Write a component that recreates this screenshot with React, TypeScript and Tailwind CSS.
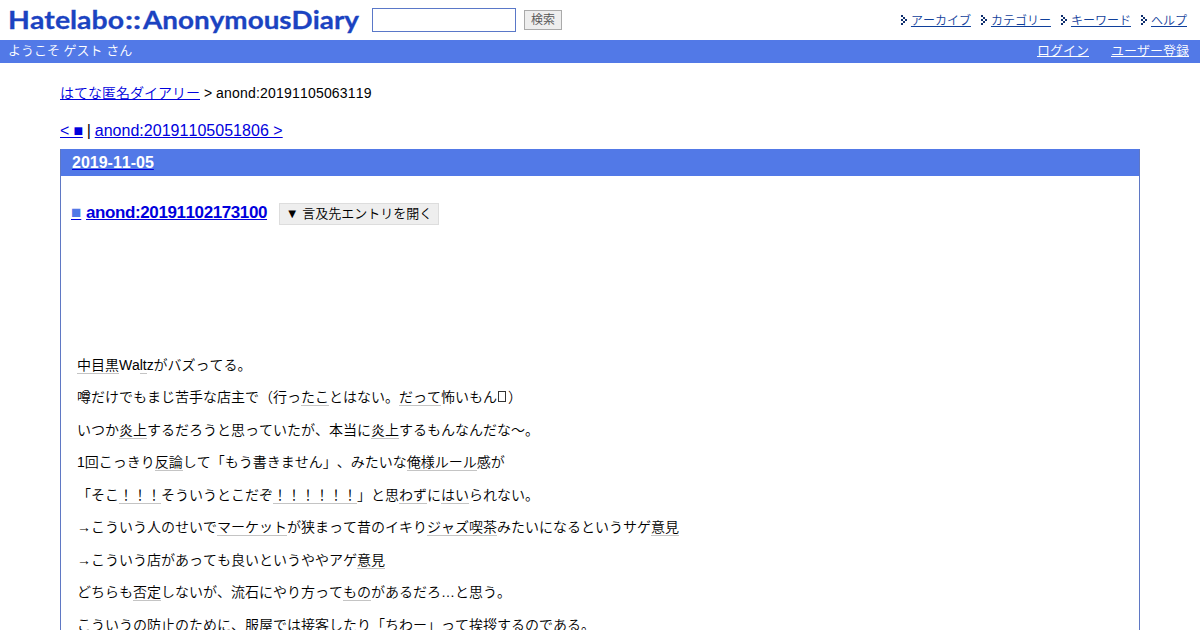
import type { ReactNode } from "react";

const menu = ["アーカイブ", "カテゴリー", "キーワード", "ヘルプ"];

const Keyword = ({ children }: { children: ReactNode }) => (
  <span className="border-b border-[#c4c4c4]">{children}</span>
);

const Arrow = () => (
  <svg width="6" height="10" viewBox="0 0 6 10" fill="#10306e" shapeRendering="crispEdges" className="mr-1">
    <path d="M0 0h2v2H0zM2 2h2v2H2zM4 4h2v2H4zM2 6h2v2H2zM0 8h2v2H0zM0 4h2v2H0z" />
  </svg>
);

const Logo = () => (
  <svg width="352" height="40" viewBox="0 0 352 40" fill="#1b43c1" stroke="#1b43c1" strokeWidth="0.3" className="font-['Lato'] font-bold">
    <text x="0" y="28.5" fontSize="25.5" textLength="116" lengthAdjust="spacingAndGlyphs">Hatelabo</text>
    <text x="117" y="28.5" fontSize="25.5" textLength="16" lengthAdjust="spacingAndGlyphs">::</text>
    <text x="135" y="28.5" fontSize="25.5" textLength="216" lengthAdjust="spacingAndGlyphs">AnonymousDiary</text>
  </svg>
);

const Header = () => (
  <header>
    <div className="flex h-10 items-center pl-2">
      <Logo />
      <input className="ml-3 h-6 w-36 border border-[#5a78c8] bg-white" />
      <button className="ml-2 h-5 w-[38px] border border-[#aaa] bg-[#eee] text-xs leading-[17px] text-[#555]">検索</button>
      <nav className="mr-[13px] ml-auto flex gap-2.5 text-xs">
        {menu.map((label) => (
          <div key={label} className="flex items-center">
            <Arrow />
            <a href="#" className="pt-px text-[#10409b] underline">{label}</a>
          </div>
        ))}
      </nav>
    </div>
    <div className="flex h-[23px] justify-between bg-[#5279e7] pr-[11px] pl-2 text-[13px] leading-[22px] text-white">
      <span>ようこそ ゲスト さん</span>
      <div className="flex gap-[22px]">
        <a href="#" className="underline">ログイン</a>
        <a href="#" className="underline">ユーザー登録</a>
      </div>
    </div>
  </header>
);

const Entry = () => (
  <div className="px-4 pt-[123.75px] text-sm leading-[32.5px]">
    <p><Keyword>中目黒</Keyword><span className="tracking-[-0.1px]">Wa<Keyword>lt</Keyword>z</span>がバズってる。</p>
    <p>
      噂だけでもまじ苦手な店主で（行っ<Keyword>たこ</Keyword>とはない。<Keyword>だって</Keyword>怖いもん
      <span className="mr-0.5 ml-px inline-block h-[11px] w-2 border border-[#333]" />）
    </p>
    <p>いつか<Keyword>炎上</Keyword>するだろうと思っていたが、本当に<Keyword>炎上</Keyword>するもんなんだな〜。</p>
    <p>1回こっきり<Keyword>反論</Keyword>して「もう書きません」、みたいな<Keyword>俺様ルール</Keyword>感が</p>
    <p>「そこ<Keyword>！！！</Keyword>そういうとこだぞ<Keyword>！！！！！！</Keyword>」と思<Keyword>わず</Keyword>に<Keyword>はい</Keyword>られない。</p>
    <p>→こういう人のせいで<Keyword>マーケット</Keyword>が狭まって昔のイキり<Keyword>ジャズ喫茶</Keyword>みたいになるというサゲ<Keyword>意見</Keyword></p>
    <p>→こういう店があっても良いというややアゲ<Keyword>意見</Keyword></p>
    <p>どちらも<Keyword>否定</Keyword>しないが、流石にやり方って<Keyword>もの</Keyword>があるだろ…と思う。</p>
    <p>こういうの防止のために、服屋では接客したり「ちわー」って挨拶するのである。</p>
  </div>
);

export default function App() {
  return (
    <div lang="ja" className="h-[630px] overflow-hidden bg-white font-['Liberation_Sans','Noto_Sans_CJK_JP',sans-serif] font-[350] text-black [font-kerning:none] [text-spacing-trim:space-all]">
      <Header />
      <main className="px-[60px]">
        <p className="pt-5 text-sm">
          <a href="#" className="text-[#0000dd] underline">はてな匿名ダイアリー</a> &gt;{" "}
          <span className="tracking-[0.2px]">anond:20191105063119</span>
        </p>
        <p className="mt-4 h-[30px] text-base">
          <a href="#" className="tracking-[-0.2px] text-[#0000dd] underline">&lt; ■</a>
          <span className="mx-1 tracking-[-0.3px]">|</span>
          <a href="#" className="tracking-[0.03px] text-[#0000dd] underline">anond:20191105051806 &gt;</a>
        </p>
        <section className="border border-t-0 border-[#5f78c4]">
          <h2 className="h-[27px] bg-[#5279e7] pl-[11px] text-base leading-[27px] font-bold">
            <a href="#" className="text-[#0000dd] underline"><span className="text-white">2019-11-05</span></a>
          </h2>
          <div className="flex h-[49px] items-end pl-2.5">
            <h3 className="text-[17px] leading-6 font-bold">
              <a href="#" className="text-[#5279e7] underline decoration-[#0000dd]">■</a>{" "}
              <a href="#" className="tracking-[-0.4px] text-[#0000dd] underline">anond:20191102173100</a>
            </h3>
            <button className="ml-3 h-[22px] w-40 border border-[#ddd] bg-[#eee] text-[13px] leading-5">▼ 言及先エントリを開く</button>
          </div>
          <Entry />
        </section>
      </main>
    </div>
  );
}
